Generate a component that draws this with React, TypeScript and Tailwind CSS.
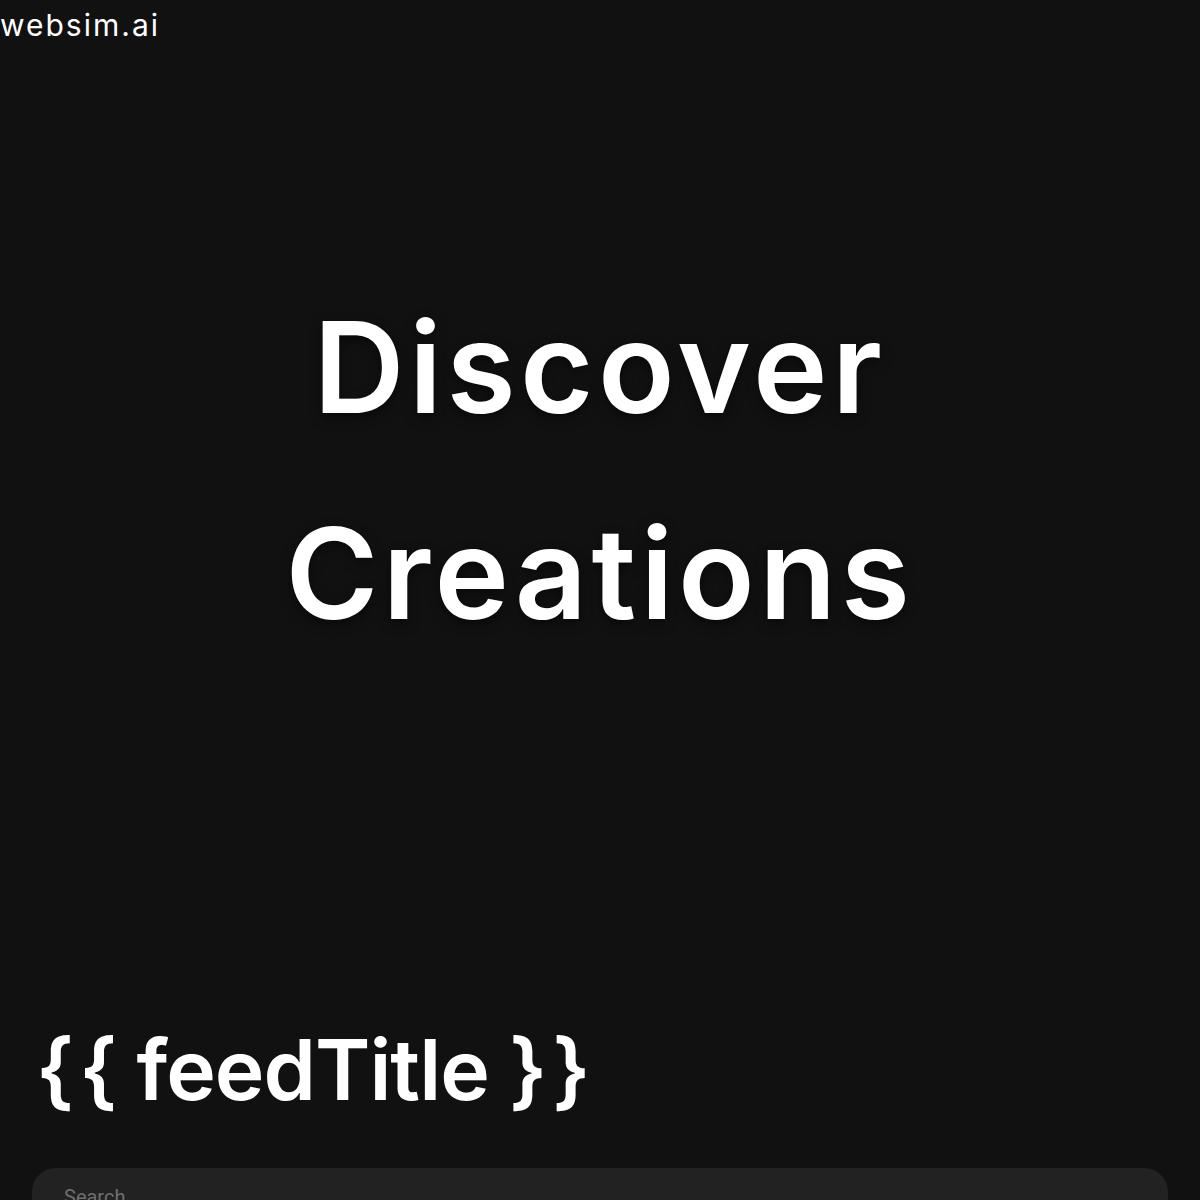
export default function App() {
  return (
    <div className="relative min-h-screen bg-[#111111] text-white font-['Inter',sans-serif] overflow-hidden">
      <div className="absolute left-0 top-0 text-[30px] leading-[50px] font-normal font-['Inter',sans-serif] tracking-[2px]">
        websim.ai
      </div>
      <section className="flex h-[940px] items-center justify-center">
        <h1 className="text-center text-[126px] leading-[206px] font-semibold tracking-[4.5px] [text-shadow:0_4px_12px_rgba(0,0,0,0.5)]">
          Discover
          <br />
          Creations
        </h1>
      </section>
      <section className="px-8 pt-[70px]">
        <h2 className="px-[4px] text-[84px] leading-[120px] font-semibold tracking-[-1px]">
          <span className="mr-[6px]">{'{'}</span>
          {'{ feedTitle '}
          <span className="mr-[6px]">{'}'}</span>
          {'}'}
        </h2>
        <div className="mt-[38px] h-[64px] rounded-[24px] bg-[#222222] px-8 pt-[14px]">
          <input
            className="w-full bg-transparent text-[20px] text-[#777777] placeholder-[#6f6f6f] outline-none font-['Roboto',sans-serif]"
            placeholder="Search"
          />
        </div>
      </section>
    </div>
  )
}
